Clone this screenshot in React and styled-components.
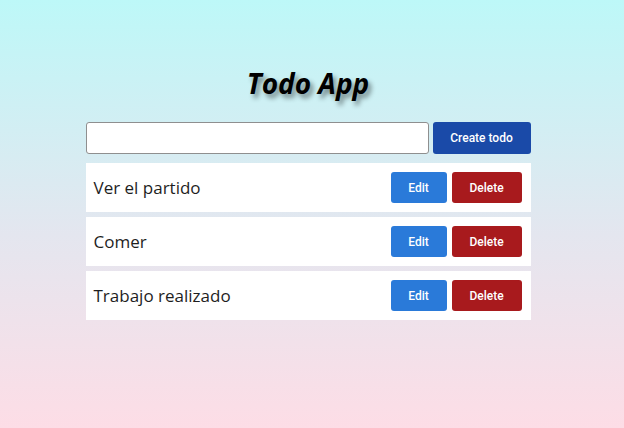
import styled, { createGlobalStyle } from "styled-components";

const todos = ["Ver el partido", "Comer", "Trabajo realizado"];

function App() {
  return (
    <>
      <GlobalStyle />
      <Page>
        <Title>Todo App</Title>
        <Form onSubmit={(e) => e.preventDefault()}>
          <Input type="text" />
          <CreateButton type="submit">Create todo</CreateButton>
        </Form>
        <List>
          {todos.map((todo) => (
            <Row key={todo}>
              <TodoText>{todo}</TodoText>
              <Actions>
                <ActionButton $color="#2a7ad9">Edit</ActionButton>
                <ActionButton $color="#a81a1d" $wide>
                  Delete
                </ActionButton>
              </Actions>
            </Row>
          ))}
        </List>
      </Page>
    </>
  );
}

const GlobalStyle = createGlobalStyle`
  html, body {
    margin: 0;
    padding: 0;
  }
  body {
    font-family: "Open Sans", "Noto Sans", sans-serif;
  }
`;

const Page = styled.div`
  width: 100%;
  min-height: 428px;
  box-sizing: border-box;
  padding: 64px 8px 0 0;
  background: linear-gradient(180deg, #bdf8f8 0%, #e4e6ef 55%, #fddde6 100%);
  display: flex;
  flex-direction: column;
  align-items: center;
`;

const Title = styled.h1`
  margin: 0 0 19px 0;
  font-family: "Open Sans", sans-serif;
  font-style: italic;
  font-weight: 700;
  font-size: 28px;
  line-height: 39px;
  color: #000;
  text-shadow: 3px 4px 5px rgba(0, 0, 0, 0.45);
`;

const Form = styled.form`
  width: 445px;
  display: flex;
  gap: 4px;
  margin-bottom: 9px;
`;

const Input = styled.input`
  flex: 1;
  height: 32px;
  box-sizing: border-box;
  border: 1px solid #8f8f8f;
  border-radius: 3px;
  background: #fff;
  outline: none;
`;

const CreateButton = styled.button`
  width: 98px;
  height: 32px;
  border: none;
  border-radius: 3px;
  background: #1a4aa8;
  color: #fff;
  font-family: Roboto, sans-serif;
  font-size: 12px;
  font-weight: 500;
  cursor: pointer;
`;

const List = styled.div`
  width: 445px;
  display: flex;
  flex-direction: column;
  gap: 5px;
`;

const Row = styled.div`
  height: 49px;
  box-sizing: border-box;
  background: #fff;
  display: flex;
  align-items: center;
  justify-content: space-between;
  padding: 0 9px 0 8px;
`;

const TodoText = styled.span`
  font-family: "Open Sans", sans-serif;
  font-size: 17px;
  color: #1e1e1e;
`;

const Actions = styled.div`
  display: flex;
  gap: 5px;
`;

const ActionButton = styled.button`
  width: ${(p) => (p.$wide ? "70px" : "56px")};
  height: 31px;
  border: none;
  border-radius: 3px;
  background: ${(p) => p.$color};
  color: #fff;
  font-family: Roboto, sans-serif;
  font-size: 12px;
  font-weight: 500;
  cursor: pointer;
`;

export default App;
